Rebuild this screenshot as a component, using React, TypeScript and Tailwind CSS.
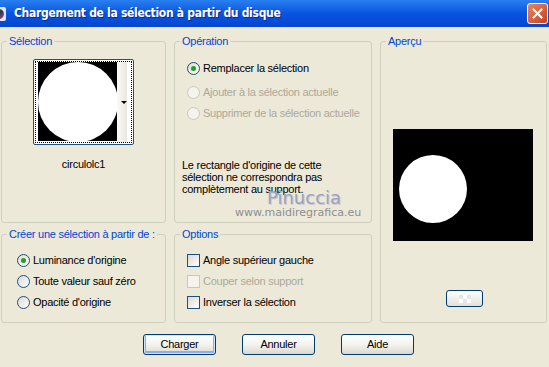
import clsx from 'clsx';

// Tahoma-like UI text
const ui = "font-['Liberation_Sans',Arial,sans-serif] text-[11px] leading-[13px] tracking-[-0.25px]";

function Radio({ checked, disabled, label }: { checked?: boolean; disabled?: boolean; label: string }) {
  return (
    <div className="flex items-center h-[13px] gap-[3px]">
      <span
        className={clsx(
          'w-[13px] h-[13px] rounded-full border flex items-center justify-center shrink-0',
          disabled ? 'border-[#cac8bb] bg-[#f4f3ee]' : 'border-[#1c5180] bg-gradient-to-br from-[#dcdad2] to-white'
        )}
      >
        {checked && <span className="w-[5px] h-[5px] rounded-full bg-[#21a121]" />}
      </span>
      <span className={clsx('whitespace-nowrap', disabled ? 'text-[#aca899]' : 'text-black')}>{label}</span>
    </div>
  );
}

function Check({ disabled, label }: { disabled?: boolean; label: string }) {
  return (
    <div className="flex items-center h-[13px] gap-[3px]">
      <span
        className={clsx(
          'w-[13px] h-[13px] border shrink-0',
          disabled ? 'border-[#cac8bb] bg-[#f4f3ee]' : 'border-[#1c5180] bg-gradient-to-br from-[#dcdad2] to-white'
        )}
      />
      <span className={clsx('whitespace-nowrap', disabled ? 'text-[#aca899]' : 'text-black')}>{label}</span>
    </div>
  );
}

function Group({ title, className, children }: { title: string; className?: string; children?: React.ReactNode }) {
  return (
    <fieldset className={clsx('border border-[#d0d0bf] rounded-[3px] min-w-0', className)}>
      <legend className="ml-[5px] px-[2px] text-[#0046d5] leading-[13px] whitespace-nowrap">{title}</legend>
      {children}
    </fieldset>
  );
}

function XpButton({ label, isDefault }: { label: string; isDefault?: boolean }) {
  return (
    <button
      className={clsx(
        'w-[73px] h-[21px] rounded-[3px] border border-[#003c74] bg-gradient-to-b from-white via-[#f3f3ef] to-[#dcd8cc] text-black',
        isDefault && 'shadow-[inset_0_0_0_1px_#cee7ff,inset_0_-1px_0_2px_#89adf0]'
      )}
    >
      {label}
    </button>
  );
}

export default function App() {
  return (
    <div className={clsx('w-[549px] h-[367px] bg-[#ece9d8] overflow-hidden', ui)}>
      {/* Title bar */}
      <div className="h-[27px] flex items-center bg-gradient-to-b from-[#2a7ff0] via-[#0854e0] to-[#0546d0]">
        <div className="-ml-[8px] w-[14px] h-[14px] rounded-[2px] bg-[#dfe7f3] flex items-center justify-center">
          <span className="w-[10px] h-[10px] rounded-full bg-gradient-to-br from-[#57b947] via-[#243553] to-[#c63d7c]" />
        </div>
        <span className="ml-[8px] text-white font-bold text-[12px] tracking-[-0.3px] [text-shadow:1px_1px_0_#0a2a8a] font-['DejaVu_Sans_Condensed','Liberation_Sans',sans-serif]">
          Chargement de la sélection à partir du disque
        </span>
        <div className="ml-auto mr-[1px] w-[21px] h-[21px] rounded-[3px] border border-white bg-gradient-to-br from-[#e8855f] to-[#c4411e] flex items-center justify-center">
          <svg width="11" height="11" viewBox="0 0 11 11">
            <path d="M1.5 1.5 L9.5 9.5 M9.5 1.5 L1.5 9.5" stroke="white" strokeWidth="2" strokeLinecap="square" />
          </svg>
        </div>
      </div>

      <div className="pt-[8px] pl-[1px] grid grid-cols-[165px_198px_167px] grid-rows-[188px_95px] gap-x-[8px] gap-y-[5px]">
        {/* Sélection */}
        <Group title="Sélection" className="flex flex-col items-center">
          <div className="mt-[11px] w-[101px] h-[86px] border border-[#1c5180] rounded-[2px] bg-white p-[1px]">
            <div className="h-full border border-dotted border-black flex pl-[2px]">
              <div className="w-[79px] h-[79px] bg-black flex items-center justify-center overflow-hidden">
                <span className="w-[80px] h-[80px] shrink-0 rounded-full bg-white" />
              </div>
              <div className="w-[10px] h-full bg-gradient-to-r from-[#fafaf8] to-[#e8e7e0] flex items-center justify-end">
                <span className="w-0 h-0 border-l-[3px] border-r-[3px] border-t-[3px] border-transparent border-t-black" />
              </div>
            </div>
          </div>
          <div className="mt-[13px] text-black">circulolc1</div>
        </Group>

        {/* Opération */}
        <Group title="Opération">
          <div className="ml-[12px] mt-[14px]">
            <Radio checked label="Remplacer la sélection" />
          </div>
          <div className="ml-[12px] mt-[11px]">
            <Radio disabled label="Ajouter à la sélection actuelle" />
          </div>
          <div className="ml-[12px] mt-[8px]">
            <Radio disabled label="Supprimer de la sélection actuelle" />
          </div>
          <div className="relative ml-[7px] mt-[39px] leading-[12px] text-black">
            <p>Le rectangle d'origine de cette</p>
            <p>sélection ne correspondra pas</p>
            <p>complètement au support.</p>
            {/* watermark */}
            <span className="absolute left-[85px] top-[30px] text-[18px] leading-[18px] tracking-normal text-[#9ea1bb] [text-shadow:1px_1px_0_#c9c9d6] font-['DejaVu_Sans',sans-serif]">
              Pinuccia
            </span>
            <span className="absolute left-[53px] top-[48px] text-[11px] leading-[12px] tracking-normal text-[#8d8d93] font-['DejaVu_Sans',sans-serif]">
              www.maidiregrafica.eu
            </span>
          </div>
        </Group>

        {/* Aperçu */}
        <Group title="Aperçu" className="row-span-2">
          <div className="ml-[12px] mt-[81px] w-[140px] h-[112px] bg-black pl-[6px] pt-[26px]">
            <div className="w-[68px] h-[68px] rounded-full bg-white" />
          </div>
          <div className="ml-[65px] mt-[49px] w-[37px] h-[17px] rounded-[3px] border border-[#003c74] bg-gradient-to-b from-white to-[#e3e0d6] flex items-center justify-center">
            <div className="grid grid-cols-3 grid-rows-2">
              <span className="w-[4px] h-[4px] bg-[#e6e6e6]" />
              <span className="w-[4px] h-[4px] bg-white" />
              <span className="w-[4px] h-[4px] bg-[#e6e6e6]" />
              <span className="w-[4px] h-[4px] bg-white" />
              <span className="w-[4px] h-[4px] bg-[#e6e6e6]" />
              <span className="w-[4px] h-[4px] bg-white" />
            </div>
          </div>
        </Group>

        {/* Créer une sélection */}
        <Group title="Créer une sélection à partir de :">
          <div className="ml-[15px] mt-[13px] flex flex-col gap-[8px]">
            <Radio checked label="Luminance d'origine" />
            <Radio label="Toute valeur sauf zéro" />
            <Radio label="Opacité d'origine" />
          </div>
        </Group>

        {/* Options */}
        <Group title="Options">
          <div className="ml-[12px] mt-[13px] flex flex-col gap-[8px]">
            <Check label="Angle supérieur gauche" />
            <Check disabled label="Couper selon support" />
            <Check label="Inverser la sélection" />
          </div>
        </Group>
      </div>

      <div className="mt-[11px] ml-[143px] flex gap-[26px]">
        <XpButton label="Charger" isDefault />
        <XpButton label="Annuler" />
        <XpButton label="Aide" />
      </div>
    </div>
  );
}
